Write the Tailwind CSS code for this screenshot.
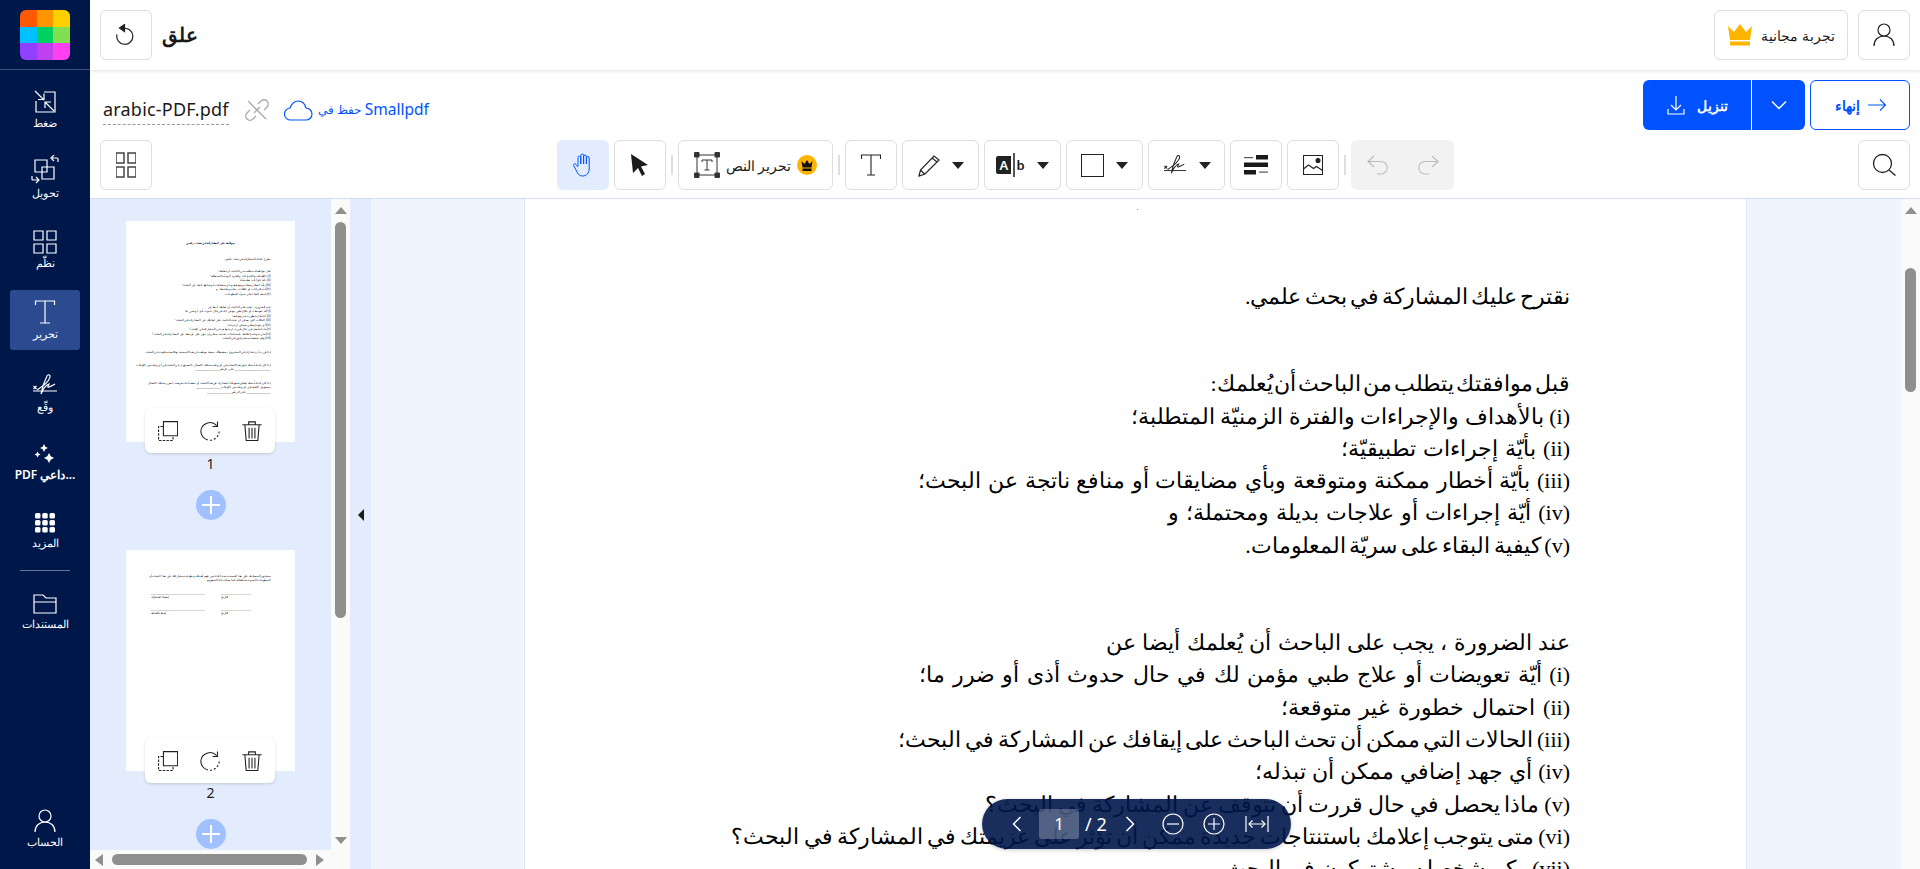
<!DOCTYPE html>
<html lang="ar">
<head>
<meta charset="UTF-8" />
<title>Smallpdf</title>
<script src="https://cdn.jsdelivr.net/npm/@tailwindcss/browser@4"></script>
</head>
<body class="h-[869px] overflow-hidden flex bg-white font-['Noto_Sans',sans-serif] text-[#1a1a1a]">

<svg class="hidden">
  <symbol id="copy" viewBox="0 0 24 24" fill="none" stroke="#222" stroke-width="1.300"><path d="M6.500.700h17v17h-17z"/><path d="M6 6.500H.700V23.300H18V18" stroke-dasharray="3 1.500"/></symbol>
  <symbol id="rotate" viewBox="0 0 24 24" fill="none" stroke="#222" stroke-width="1.300"><path d="M20 5.500A11 11 0 0 0 1 12a11 11 0 0 0 8.500 10.800"/><path d="M12 23a11 11 0 0 0 11-11" stroke-dasharray="2.500 2.200"/><path d="M21 .500V6.500h-6"/></symbol>
  <symbol id="trash" viewBox="0 0 24 24" fill="none" stroke="#222" stroke-width="1.300"><path d="M.500 4.500h23M8 4.500V1h8v3.500M3.500 5l1.500 18.500h14L20.500 5M8.500 8v13M12 8v13M15.500 8v13"/></symbol>
</svg>

<!-- Sidebar -->
<nav class="w-[90px] h-full shrink-0 bg-[#00174a] text-white flex flex-col items-center text-[11px] leading-[14px]">
  <div class="w-full h-[70px] border-b border-white/25 flex items-start justify-center pt-[10px]">
    <div class="w-[50px] h-[50px] rounded-[6px] overflow-hidden grid grid-cols-3 grid-rows-3">
      <div class="bg-[#ff5a00]"></div><div class="bg-[#ff9500]"></div><div class="bg-[#ffd000]"></div>
      <div class="bg-[#00c0ff]"></div><div class="bg-[#00d060]"></div><div class="bg-[#80e050]"></div>
      <div class="bg-[#9040ff]"></div><div class="bg-[#c040f0]"></div><div class="bg-[#ff40f0]"></div>
    </div>
  </div>
  <div class="w-[70px] flex flex-col gap-[10px] mt-[10px]">
    <a class="h-[60px] flex flex-col items-center justify-end pb-[10px] gap-[1px]">
      <svg class="w-[24px] h-[26px]" viewBox="0 0 24 26" fill="none" stroke="#fff" stroke-width="1.200"><path d="M11 3h11v20H3V12"/><path d="M2 2l9 9M5 10.500h6v-6"/><path d="M21 22l-9-9M12 19v-6h6"/></svg>
      <span>ضغط</span>
    </a>
    <a class="h-[60px] flex flex-col items-center justify-end pb-[10px] gap-[1px]">
      <svg class="w-[28px] h-[30px]" viewBox="0 0 28 30" fill="none" stroke="#fff" stroke-width="1.200"><path d="M4 5h12v12H4z"/><path d="M11 12h12v12H11z"/><path d="M27 7V4q0-1-1-1h-5M23 0l-3 3 3 3"/><path d="M1 21v3q0 1 1 1h5M5 28l3-3-3-3"/></svg>
      <span>تحويل</span>
    </a>
    <a class="h-[60px] flex flex-col items-center justify-end pb-[10px] gap-[2px]">
      <svg class="w-[24px] h-[24px]" viewBox="0 0 24 24" fill="none" stroke="#fff" stroke-width="1.200"><path d="M1 1h9v9H1zM14 1h9v9h-9zM1 14h9v9H1zM14 14h9v9h-9z"/></svg>
      <span>نظّم</span>
    </a>
    <a class="h-[60px] rounded-[3px] bg-[#2b4a8f] flex flex-col items-center justify-end pb-[9px] gap-[2px]">
      <svg class="w-[22px] h-[26px]" viewBox="0 0 22 26" fill="none" stroke="#fff" stroke-width="1.200"><path d="M1.500 6V2h19v4M1.500 2h19M11 2v22M6 24h10"/></svg>
      <span>تحرير</span>
    </a>
    <a class="h-[60px] flex flex-col items-center justify-end pb-[6px] gap-[3px]">
      <svg class="w-[26px] h-[24px]" viewBox="0 0 26 24" fill="none" stroke="#fff" stroke-width="1.200"><path d="M1 18h24" stroke-width="1"/><path d="M1.500 13l3 3m0-3l-3 3"/><path d="M5 17C11 13 17 9 18 4c.500-2.500-2-3-3-1-2 4-5 12-6 18 2-5 5-9 8-10-1 2-2 4 0 3s4-1.500 6-3"/></svg>
      <span>وقّع</span>
    </a>
    <a class="h-[60px] flex flex-col items-center justify-end pb-[8px] gap-[2px]">
      <svg class="w-[22px] h-[22px]" viewBox="0 0 22 22" fill="#fff"><path d="M10 0l1.300 2.700L14 4l-2.700 1.300L10 8 8.700 5.300 6 4l2.700-1.300zM3.500 7.500l1 2 2 1-2 1-1 2-1-2-2-1 2-1zM15 9l1.700 3.300L20 14l-3.300 1.700L15 19l-1.700-3.300L10 14l3.300-1.700z"/></svg>
      <span dir="ltr" class="text-[12px] font-semibold whitespace-nowrap">PDF داعي...</span>
    </a>
    <a class="h-[60px] flex flex-col items-center justify-end pb-[10px] gap-[3px]">
      <svg class="w-[22px] h-[20px]" viewBox="0 0 22 20" fill="#fff"><rect x="1" y="0" width="5.500" height="5.500" rx="1.500"/><rect x="8.250" y="0" width="5.500" height="5.500" rx="1.500"/><rect x="15.500" y="0" width="5.500" height="5.500" rx="1.500"/><rect x="1" y="7" width="5.500" height="5.500" rx="1.500"/><rect x="8.250" y="7" width="5.500" height="5.500" rx="1.500"/><rect x="15.500" y="7" width="5.500" height="5.500" rx="1.500"/><rect x="1" y="14" width="5.500" height="5.500" rx="1.500"/><rect x="8.250" y="14" width="5.500" height="5.500" rx="1.500"/><rect x="15.500" y="14" width="5.500" height="5.500" rx="1.500"/></svg>
      <span>المزيد</span>
    </a>
  </div>
  <div class="w-[50px] border-t border-white/40 mt-[10px]"></div>
  <a class="mt-[10px] h-[60px] flex flex-col items-center justify-start pt-[13px] gap-[3px]">
    <svg class="w-[24px] h-[20px]" viewBox="0 0 24 20" fill="none" stroke="#fff" stroke-width="1.200"><path d="M1 19V1h9l3 3h10v15zM1 8h22"/></svg>
    <span>المستندات</span>
  </a>
  <a class="mt-auto mb-[20px] flex flex-col items-center gap-[2px]">
    <svg class="w-[22px] h-[24px]" viewBox="0 0 22 24" fill="none" stroke="#fff" stroke-width="1.200"><circle cx="11" cy="7" r="6"/><path d="M1 23c0-6 4-10 10-10s10 4 10 10"/></svg>
    <span>الحساب</span>
  </a>
</nav>

<div class="flex-1 min-w-0 flex flex-col h-full">
  <!-- Top bar -->
  <header class="h-[70px] shrink-0 flex items-start justify-between px-[10px] pt-[10px] shadow-[0_1px_4px_rgba(0,0,0,0.12)] relative z-10">
    <div class="flex items-center gap-[10px] h-[50px]">
      <button class="w-[52px] h-[50px] border border-[#dedede] rounded-[6px] flex items-center justify-center">
        <svg class="w-[20px] h-[22px]" viewBox="0 0 20 22" fill="none" stroke="#222" stroke-width="1.200"><path d="M7 4.500a8 8 0 1 1-6 6"/><path d="M8.500 0.500L3.500 4l5 3.500z" fill="#222"/></svg>
      </button>
      <span class="text-[20px] font-bold">علق</span>
    </div>
    <div class="flex items-center gap-[10px]">
      <button class="w-[134px] h-[50px] border border-[#dedede] rounded-[6px] flex items-center justify-center gap-[8px] text-[14px]">
        <svg class="w-[26px] h-[22px]" viewBox="0 0 26 22" fill="#ffb400"><path d="M1 2l6 6 6-8 6 8 6-6-2 14H3z"/><path d="M3 17.500h20V21.500H3z"/></svg>
        <span>تجربة مجانية</span>
      </button>
      <button class="w-[52px] h-[50px] border border-[#dedede] rounded-[6px] flex items-center justify-center">
        <svg class="w-[22px] h-[24px]" viewBox="0 0 22 24" fill="none" stroke="#222" stroke-width="1.200"><circle cx="11" cy="7" r="6"/><path d="M1 23c0-6 4-10 10-10s10 4 10 10"/></svg>
      </button>
    </div>
  </header>

  <!-- File row -->
  <div class="h-[70px] shrink-0 flex items-center justify-between pl-[13px] pr-[10px] pt-[10px]">
    <div class="flex items-center">
      <span class="text-[18px] tracking-[0.2px] border-b border-dashed border-[#999] pb-[1px]">arabic-PDF.pdf</span>
      <svg class="w-[24px] h-[24px] ml-[16px]" viewBox="0 0 24 24" fill="none" stroke="#aaa" stroke-width="1.300"><path d="M9 15l6-6"/><path d="M13 6l3-3a4 4 0 0 1 6 6l-3 3M11 18l-3 3a4 4 0 0 1-6-6l3-3"/><path d="M3 3l18 18"/></svg>
      <svg class="w-[29px] h-[21px] ml-[15px]" viewBox="0 0 29 21" fill="none" stroke="#0052ff" stroke-width="1.200"><path d="M7 20a6 6 0 0 1-1-12C8 3 11 1 14 1c4 0 7 3 8 7a6 6 0 0 1 0 12z"/></svg>
      <span class="ml-[5px] text-[#0052ff] flex items-center gap-[4px]" dir="ltr"><span class="text-[12px]">حفظ في</span><span class="text-[15.500px]">Smallpdf</span></span>
    </div>
    <div class="self-start flex items-center gap-[5px]">
      <div class="flex w-[162px] h-[50px] bg-[#0052ff] rounded-[6px] text-white text-[14px] font-bold">
        <div class="w-[109px] flex items-center justify-center gap-[12px] border-r border-white">
          <svg class="w-[18px] h-[20px]" viewBox="0 0 18 20" fill="none" stroke="#fff" stroke-width="1.200"><path d="M9 1v14M4 10l5 5 5-5M1 14v5h16v-5"/></svg>
          <span>تنزيل</span>
        </div>
        <div class="flex-1 flex items-center justify-center">
          <svg class="w-[16px] h-[10px]" viewBox="0 0 16 10" fill="none" stroke="#fff" stroke-width="1.500"><path d="M1 1.500l7 7 7-7"/></svg>
        </div>
      </div>
      <button class="w-[100px] h-[50px] border border-[#0052ff] rounded-[6px] text-[#0052ff] text-[14px] font-bold flex items-center justify-center gap-[8px]">
        <span>إنهاء</span>
        <svg class="w-[18px] h-[12px]" viewBox="0 0 18 12" fill="none" stroke="#0052ff" stroke-width="1.100"><path d="M0 6h17M12 .500L17.500 6 12 11.500"/></svg>
      </button>
    </div>
  </div>

  <!-- Tool row -->
  <div class="h-[59px] shrink-0 border-b border-[#d3def5] flex items-start pl-[10px] pr-[10px]">
    <button class="w-[52px] h-[50px] border border-[#dedede] rounded-[6px] flex items-center justify-center">
      <svg class="w-[20px] h-[26px]" viewBox="0 0 20 26" fill="none" stroke="#444" stroke-width="1.500"><path d="M0 1h8v10H0zM12 1h8v10h-8zM0 15h8v10H0zM12 15h8v10h-8z"/></svg>
    </button>
    <div class="flex items-center h-[50px] gap-[5px] ml-[405px]">
      <button class="w-[52px] h-[50px] bg-[#e3ecff] rounded-[6px] flex items-center justify-center">
        <svg class="w-[20px] h-[24px]" viewBox="0 0 20 24" fill="none" stroke="#0052ff" stroke-width="1"><path d="M5 13V4.500a1.400 1.400 0 0 1 2.800 0V11M7.800 11V2.500a1.400 1.400 0 0 1 2.800 0V11M10.600 11V3.500a1.400 1.400 0 0 1 2.800 0V11M13.400 11V5a1.400 1.400 0 0 1 2.800 0v11c0 4-3 7-6.500 7S5 21 3.500 18L.700 12.500c-.700-1.500 1.500-2.500 2.500-1L5 14"/></svg>
      </button>
      <button class="w-[52px] h-[50px] border border-[#dedede] rounded-[6px] flex items-center justify-center">
        <svg class="w-[18px] h-[22px]" viewBox="0 0 18 22" fill="#1a1a1a"><path d="M0 0l17 11-7 1.500 4 7.500-3 2-4-8-5 5z"/></svg>
      </button>
      <div class="w-[2px] h-[20px] bg-[#dedede]"></div>
      <button class="w-[155px] h-[50px] border border-[#dedede] rounded-[6px] flex items-center justify-center gap-[6px] text-[14px]">
        <svg class="w-[26px] h-[26px]" viewBox="0 0 26 26" fill="none"><path d="M3 3h20v20H3z" stroke="#333" stroke-width="1"/><path d="M8 10V8h10v2M13 8v10M10.500 18h5" stroke="#333"/><rect x="0" y="0" width="5.500" height="5.500" rx="1" fill="#333"/><rect x="20.500" y="0" width="5.500" height="5.500" rx="1" fill="#333"/><rect x="0" y="20.500" width="5.500" height="5.500" rx="1" fill="#333"/><rect x="20.500" y="20.500" width="5.500" height="5.500" rx="1" fill="#333"/></svg>
        <span>تحرير النص</span>
        <span class="w-[20px] h-[20px] rounded-full bg-[#ffb400] flex items-center justify-center">
          <svg class="w-[12px] h-[11px]" viewBox="0 0 12 11" fill="#111"><path d="M.500 1l3 3L6 0l2.500 4 3-3-1 6.500h-9zM1.500 8.500h9V11h-9z"/></svg>
        </span>
      </button>
      <div class="w-[2px] h-[20px] bg-[#dedede]"></div>
      <button class="w-[52px] h-[50px] border border-[#dedede] rounded-[6px] flex items-center justify-center">
        <svg class="w-[20px] h-[22px]" viewBox="0 0 20 22" fill="none" stroke="#222" stroke-width="1.100"><path d="M.500 5V1h19v4M.500 1h19M10 1v20M6 21h8"/></svg>
      </button>
      <button class="w-[77px] h-[50px] border border-[#dedede] rounded-[6px] flex items-center justify-center gap-[12px]">
        <svg class="w-[22px] h-[24px]" viewBox="0 0 22 24" fill="none" stroke="#222" stroke-width="1.200"><path d="M1 23l1.500-6L16 3l5 4L7 21zM14 5l5 4M2.500 17l4 4"/></svg>
        <span class="border-x-[6.500px] border-t-[7px] border-x-transparent border-t-[#222]"></span>
      </button>
      <button class="w-[77px] h-[50px] border border-[#dedede] rounded-[6px] flex items-center justify-center gap-[12px]">
        <span class="flex items-center text-[13px] font-semibold leading-none">
          <span class="w-[15px] h-[18px] bg-[#222] text-white flex items-center justify-center rounded-l-[2px]">A</span>
          <span class="w-[5px] h-[24px] flex items-center justify-center"><span class="w-[2px] h-[24px] bg-[#555]"></span></span>
          <span>b</span>
        </span>
        <span class="border-x-[6.500px] border-t-[7px] border-x-transparent border-t-[#222]"></span>
      </button>
      <button class="w-[77px] h-[50px] border border-[#dedede] rounded-[6px] flex items-center justify-center gap-[12px]">
        <span class="w-[23px] h-[23px] border-[1.500px] border-[#222]"></span>
        <span class="border-x-[6.500px] border-t-[7px] border-x-transparent border-t-[#222]"></span>
      </button>
      <button class="w-[77px] h-[50px] border border-[#dedede] rounded-[6px] flex items-center justify-center gap-[12px]">
        <svg class="w-[24px] h-[24px]" viewBox="0 0 26 24" fill="none" stroke="#222" stroke-width="1.100"><path d="M1 18h24" stroke-width="1"/><path d="M1.500 13l3 3m0-3l-3 3"/><path d="M5 17C11 13 17 9 18 4c.500-2.500-2-3-3-1-2 4-5 12-6 18 2-5 5-9 8-10-1 2-2 4 0 3s4-1.500 6-3"/></svg>
        <span class="border-x-[6.500px] border-t-[7px] border-x-transparent border-t-[#222]"></span>
      </button>
      <button class="w-[52px] h-[50px] border border-[#dedede] rounded-[6px] flex items-center justify-center">
        <svg class="w-[24px] h-[20px]" viewBox="0 0 24 20" fill="#1a1a1a"><rect x="12" y="0" width="12" height="4.500"/><rect x="0" y="2" width="9" height="1.200" fill="#555"/><rect x="0" y="7.500" width="24" height="4.500"/><rect x="0" y="15" width="12" height="4.500"/><rect x="15" y="16.500" width="9" height="1.200" fill="#555"/></svg>
      </button>
      <button class="w-[52px] h-[50px] border border-[#dedede] rounded-[6px] flex items-center justify-center">
        <svg class="w-[20px] h-[20px]" viewBox="0 0 20 20" fill="none" stroke="#222" stroke-width="1.100"><path d="M.500.500h19v19H.500z"/><path d="M.500 14l5-4 5 3.500 3-2 6 4"/><circle cx="15" cy="5.500" r="2" fill="#222"/></svg>
      </button>
      <div class="w-[2px] h-[20px] bg-[#dedede]"></div>
      <div class="w-[103px] h-[50px] bg-[#f2f2f2] rounded-[6px] flex items-center justify-center gap-[30px]">
        <svg class="w-[21px] h-[20px]" viewBox="0 0 21 20" fill="none" stroke="#bbb" stroke-width="1.100"><path d="M7 1L1 6.500 7 12M1 6.500h13a6 6 0 0 1 0 12.500h-4"/></svg>
        <svg class="w-[21px] h-[20px]" viewBox="0 0 21 20" fill="none" stroke="#bbb" stroke-width="1.100"><path d="M14 1l6 5.500L14 12M20 6.500H7a6 6 0 0 0 0 12.500h4"/></svg>
      </div>
    </div>
    <button class="ml-auto w-[52px] h-[50px] border border-[#dedede] rounded-[6px] flex items-center justify-center">
      <svg class="w-[24px] h-[24px]" viewBox="0 0 24 24" fill="none" stroke="#222" stroke-width="1.300"><circle cx="10.500" cy="10.500" r="9"/><path d="M17 17l6.500 5.500"/></svg>
    </button>
  </div>

  <!-- Workspace -->
  <div class="flex-1 min-h-0 flex">
    <!-- Thumbnails -->
    <aside class="w-[281px] shrink-0 flex flex-col bg-[#e3ecfd]">
      <div class="flex-1 min-h-0 flex">
        <div class="w-[241px] overflow-hidden flex flex-col items-center pt-[22px] relative">

          <div class="w-[169px] h-[221px] shrink-0 bg-white overflow-hidden">
            <div class="w-[1223px] origin-top-left scale-[0.138] font-['Liberation_Serif',serif] text-[22px] leading-[32.300px] text-black pr-[176px] pt-[144px]" dir="rtl">
              <p class="text-center font-bold pl-[176px]">موافقة على المشاركة في بحث دراسي</p>
              <p class="mt-[85px]">نقترح عليك المشاركة في بحث علمي.</p>
              <p class="mt-[55px]">قبل موافقتك يتطلب من الباحث أن يُعلمك:</p>
              <p>(i) بالأهداف والإجراءات والفترة الزمنيّة المتطلبة؛</p>
              <p>(ii) بأيّة إجراءات تطبيقيّة؛</p>
              <p>(iii) بأيّة أخطار ممكنة ومتوقعة وبأي مضايقات أو منافع ناتجة عن البحث؛</p>
              <p>(iv) أيّة إجراءات أو علاجات بديلة ومحتملة؛ و</p>
              <p>(v) كيفية البقاء على سريّة المعلومات.</p>
              <p class="mt-[65px]">عند الضرورة ، يجب على الباحث أن يُعلمك أيضا عن</p>
              <p>(i) أيّة تعويضات أو علاج طبي مؤمن لك في حال حدوث أذى أو ضرر ما؛</p>
              <p>(ii) احتمال خطورة غير متوقعة؛</p>
              <p>(iii) الحالات التي ممكن أن تحث الباحث على إيقافك عن المشاركة في البحث؛</p>
              <p>(iv) أي جهد إضافي ممكن أن تبذله؛</p>
              <p>(v) ماذا يحصل في حال قررت أن تتوقف عن المشاركة في البحث؟</p>
              <p>(vi) متى يتوجب إعلامك باستنتاجات جديدة ممكن أن تؤثر على عزيمتك في المشاركة في البحث؟</p>
              <p>(vii) وكم شخصا سيشتركون في البحث.</p>
              <p class="mt-[65px]">إذا قررت أن تشارك في المشروع ، ستعطاك نسخة موقعة عن هذا المستند وخلاصة مكتوبة عن البحث.</p>
              <p class="mt-[65px]">إذا كان لديك أسئلة حول هذا البحث في أي وقت يمكنك الاتصال بالمسؤول عن البحث في أي وقت من الأوقات</p>
              <p>________________________ على الرقم ________________</p>
              <p class="mt-[65px]">إذا كان لديك أسئلة تتعلق بحقوقك كمشارك في هذا البحث أو تعتقد أنك تعرضت لضرر يمكنك الاتصال</p>
              <p>بمسؤول اللجنة في أي وقت من الأوقات ________________</p>
              <p>________________ على الرقم ________________</p>
            </div>
          </div>
          <div class="absolute top-[209px] left-[55px] w-[130px] h-[45px] bg-white rounded-[6px] shadow-[0_1px_3px_rgba(0,0,0,0.15)] flex items-center justify-between px-[13px]">
            <svg class="w-[20px] h-[20px]"><use href="#copy"/></svg>
            <svg class="w-[20px] h-[20px]"><use href="#rotate"/></svg>
            <svg class="w-[20px] h-[20px]"><use href="#trash"/></svg>
          </div>
          <span class="mt-[13px] text-[14px] leading-[18px] h-[18px] shrink-0 text-[#222]">1</span>
          <span class="mt-[17px] w-[30px] h-[30px] rounded-full bg-[#a0c0ff] shrink-0 flex items-center justify-center">
            <svg class="w-[18px] h-[18px]" viewBox="0 0 18 18" stroke="#fff" stroke-width="2"><path d="M0 9h18M9 0v18"/></svg>
          </span>

          <div class="mt-[30px] w-[169px] h-[221px] shrink-0 bg-white overflow-hidden">
            <div class="w-[1223px] origin-top-left scale-[0.138] font-['Liberation_Serif',serif] text-[22px] leading-[32.300px] text-black pr-[176px] pt-[170px]" dir="rtl">
              <p>يمنحون المصادقة على هذا المستند بعد تأكدك من فهم أهدافه وطوعية مشاركتك في هذا البحث بأن</p>
              <p>المعلومات السرية ستُعاملك كما يعدك ذلك المفهوم.</p>
              <div class="mt-[85px] pl-[179px] flex gap-[116px] text-[20px]" dir="ltr">
                <p class="w-[393px] border-t-[3px] border-[#999] text-left" dir="rtl"><span class="float-left">إمضاء المشارك</span></p>
                <p class="w-[218px] border-t-[3px] border-[#999]" dir="rtl"><span class="float-left">التاريخ</span></p>
              </div>
              <div class="mt-[84px] pl-[179px] flex gap-[116px] text-[20px]" dir="ltr">
                <p class="w-[393px] border-t-[3px] border-[#999]" dir="rtl"><span class="float-left">إمضاء الشاهد</span></p>
                <p class="w-[218px] border-t-[3px] border-[#999]" dir="rtl"><span class="float-left">التاريخ</span></p>
              </div>
            </div>
          </div>
          <div class="absolute top-[539px] left-[55px] w-[130px] h-[45px] bg-white rounded-[6px] shadow-[0_1px_3px_rgba(0,0,0,0.15)] flex items-center justify-between px-[13px]">
            <svg class="w-[20px] h-[20px]"><use href="#copy"/></svg>
            <svg class="w-[20px] h-[20px]"><use href="#rotate"/></svg>
            <svg class="w-[20px] h-[20px]"><use href="#trash"/></svg>
          </div>
          <span class="mt-[13px] text-[14px] leading-[18px] h-[18px] shrink-0 text-[#222]">2</span>
          <span class="mt-[17px] w-[30px] h-[30px] rounded-full bg-[#a0c0ff] shrink-0 flex items-center justify-center">
            <svg class="w-[18px] h-[18px]" viewBox="0 0 18 18" stroke="#fff" stroke-width="2"><path d="M0 9h18M9 0v18"/></svg>
          </span>
        </div>
        <!-- vertical scrollbar -->
        <div class="w-[19px] bg-[#fafafa] flex flex-col items-center relative">
          <span class="mt-[8px] border-x-[6px] border-b-[7px] border-x-transparent border-b-[#8f8f8f]"></span>
          <span class="mt-[8px] w-[11px] h-[396px] rounded-full bg-[#8f8f8f]"></span>
          <span class="mt-auto mb-[6px] border-x-[6px] border-t-[7px] border-x-transparent border-t-[#8f8f8f]"></span>
        </div>
        <div class="flex-1 flex items-center justify-center pb-[20px]">
          <span class="border-y-[6px] border-r-[6px] border-y-transparent border-r-[#1a1a1a]"></span>
        </div>
      </div>
      <!-- horizontal scrollbar -->
      <div class="h-[19px] w-[260px] bg-[#fafafa] flex items-center px-[5px] shrink-0">
        <span class="border-y-[6px] border-r-[8px] border-y-transparent border-r-[#8f8f8f]"></span>
        <span class="ml-[9px] w-[195px] h-[11px] rounded-full bg-[#8f8f8f]"></span>
        <span class="ml-[9px] border-y-[6px] border-l-[8px] border-y-transparent border-l-[#8f8f8f]"></span>
      </div>
    </aside>

    <!-- Viewer -->
    <main class="flex-1 min-w-0 bg-[#f0f5fd] flex relative">
      <div class="flex-1 min-w-0 flex overflow-hidden">
        <div class="relative ml-[153px] w-[1223px] shrink-0 bg-white border-x border-[#e0e6f2] font-['Liberation_Serif',serif] text-[22px] leading-[32.300px] text-black pr-[176px] pt-[82px]" dir="rtl">
          <span class="absolute left-[612px] top-[10px] w-[1px] h-[1px] bg-[#999]"></span>
          <p class="[word-spacing:-2.400px]">نقترح عليك المشاركة في بحث علمي.</p>
          <p class="mt-[55px] [word-spacing:-3.600px]">قبل موافقتك يتطلب من الباحث أن يُعلمك:</p>
          <p>(i) بالأهداف والإجراءات والفترة الزمنيّة المتطلبة؛</p>
          <p class="[word-spacing:1.700px]">(ii) بأيّة إجراءات تطبيقيّة؛</p>
          <p class="[word-spacing:1.100px]">(iii) بأيّة أخطار ممكنة ومتوقعة وبأي مضايقات أو منافع ناتجة عن البحث؛</p>
          <p class="[word-spacing:1.500px]">(iv) أيّة إجراءات أو علاجات بديلة ومحتملة؛ و</p>
          <p class="[word-spacing:-2px]">(v) كيفية البقاء على سريّة المعلومات.</p>
          <p class="mt-[65px] [word-spacing:1px]">عند الضرورة ، يجب على الباحث أن يُعلمك أيضا عن</p>
          <p class="[word-spacing:2px]">(i) أيّة تعويضات أو علاج طبي مؤمن لك في حال حدوث أذى أو ضرر ما؛</p>
          <p class="[word-spacing:2.400px]">(ii) احتمال خطورة غير متوقعة؛</p>
          <p class="[word-spacing:-1.700px]">(iii) الحالات التي ممكن أن تحث الباحث على إيقافك عن المشاركة في البحث؛</p>
          <p class="[word-spacing:0.600px]">(iv) أي جهد إضافي ممكن أن تبذله؛</p>
          <p class="[word-spacing:-0.600px]">(v) ماذا يحصل في حال قررت أن تتوقف عن المشاركة في البحث؟</p>
          <p class="[word-spacing:-1.300px]">(vi) متى يتوجب إعلامك باستنتاجات جديدة ممكن أن تؤثر على عزيمتك في المشاركة في البحث؟</p>
          <p>(vii) وكم شخصا سيشتركون في البحث.</p>
        </div>
      </div>
      <div class="w-[19px] shrink-0 bg-[#fafafa] flex flex-col items-center">
        <span class="mt-[8px] border-x-[6px] border-b-[7px] border-x-transparent border-b-[#8f8f8f]"></span>
        <span class="mt-[54px] w-[11px] h-[124px] rounded-full bg-[#8f8f8f]"></span>
      </div>

      <!-- Floating page nav -->
      <div class="absolute left-[611px] top-[600px] w-[309px] h-[50px] rounded-full bg-[#00174a]/90 text-white flex items-center pl-[30px] shadow-[0_1px_4px_rgba(0,0,0,0.2)]">
        <svg class="w-[10px] h-[16px]" viewBox="0 0 10 16" fill="none" stroke="#fff" stroke-width="1.500"><path d="M8.500 1L1.500 8l7 7"/></svg>
        <span class="ml-[17px] w-[40px] h-[30px] rounded-[3px] bg-white/25 flex items-center justify-center text-[17px]">1</span>
        <span class="ml-[6px] text-[18px] w-[22px] whitespace-nowrap">/ 2</span>
        <svg class="ml-[18px] w-[10px] h-[16px]" viewBox="0 0 10 16" fill="none" stroke="#fff" stroke-width="1.500"><path d="M1.500 1l7 7-7 7"/></svg>
        <svg class="ml-[27px] w-[22px] h-[22px]" viewBox="0 0 22 22" fill="none" stroke="#fff" stroke-width="1.200"><circle cx="11" cy="11" r="10"/><path d="M5 11h12"/></svg>
        <svg class="ml-[19px] w-[22px] h-[22px]" viewBox="0 0 22 22" fill="none" stroke="#fff" stroke-width="1.200"><circle cx="11" cy="11" r="10"/><path d="M5 11h12M11 5v12"/></svg>
        <svg class="ml-[20px] w-[24px] h-[16px]" viewBox="0 0 24 16" fill="none" stroke="#fff" stroke-width="1.200"><path d="M1 0v16M23 0v16M4 8h16"/><path d="M7.500 4.500L4 8l3.500 3.500M16.500 4.500L20 8l-3.500 3.500"/></svg>
      </div>
    </main>
  </div>
</div>
</body>
</html>
